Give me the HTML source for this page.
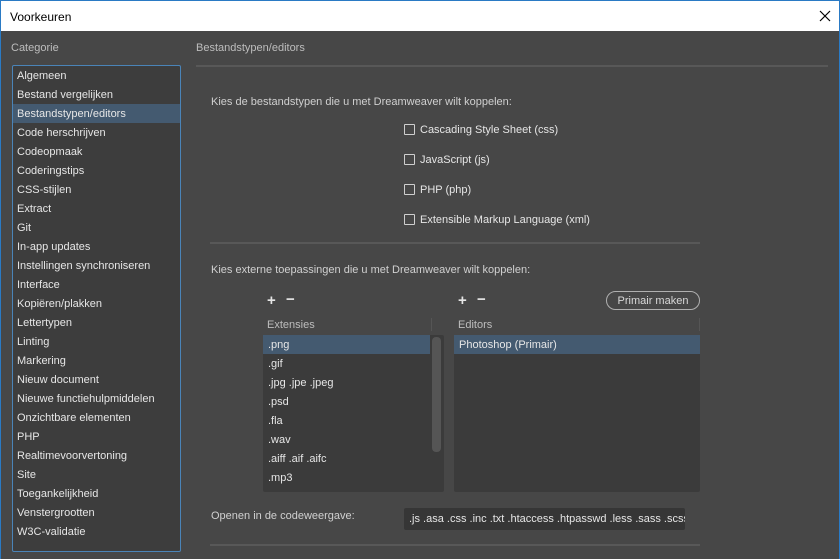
<!DOCTYPE html>
<html><head><style>
*{margin:0;padding:0;box-sizing:border-box}
body{width:840px;height:559px;overflow:hidden;background:#474747;font-family:"Liberation Sans",sans-serif;font-size:11px;color:#e6e6e6;position:relative}
.a{position:absolute;white-space:nowrap}
span.a{margin-top:1px}
#title{left:0;top:0;width:840px;height:31px;background:#fff;border:1px solid #2a7ac4;border-bottom:none;color:#000;font-size:12px}
#frame{left:0;top:31px;width:840px;height:528px;border-left:1px solid #2a7ac4;border-right:1px solid #2a7ac4}
.dim{color:#bdbdbd}
#side{left:12px;top:65px;width:169px;height:487px;background:#3d3d3d;border:1px solid #4a84b8;border-radius:2px}
.it{position:absolute;left:0;width:167px;height:19px;line-height:21px;padding-left:4px}
.sel{background:#445a70}
.line{position:absolute;height:2px;background:#585858}
.cb{position:absolute;width:11px;height:11px;border:1px solid #cfcfcf;border-radius:1px}
.list{position:absolute;background:#3b3b3b;border-radius:2px}
.li{position:absolute;left:0;height:19px;line-height:21px;padding-left:5px}
</style></head><body>
<div class="a" id="title"><span class="a" style="left:9px;top:8px">Voorkeuren</span>
<svg class="a" style="left:818px;top:9px" width="12" height="12"><path d="M1 1L11 11M11 1L1 11" stroke="#000" stroke-width="1.2"/></svg></div>
<div class="a" id="frame"></div>
<span class="a dim" style="left:11px;top:41px">Categorie</span>
<span class="a dim" style="left:196px;top:41px">Bestandstypen/editors</span>
<div class="a" id="side">
<div class="it" style="top:0">Algemeen</div>
<div class="it" style="top:19px">Bestand vergelijken</div>
<div class="it sel" style="top:38px">Bestandstypen/editors</div>
<div class="it" style="top:57px">Code herschrijven</div>
<div class="it" style="top:76px">Codeopmaak</div>
<div class="it" style="top:95px">Coderingstips</div>
<div class="it" style="top:114px">CSS-stijlen</div>
<div class="it" style="top:133px">Extract</div>
<div class="it" style="top:152px">Git</div>
<div class="it" style="top:171px">In-app updates</div>
<div class="it" style="top:190px">Instellingen synchroniseren</div>
<div class="it" style="top:209px">Interface</div>
<div class="it" style="top:228px">Kopiëren/plakken</div>
<div class="it" style="top:247px">Lettertypen</div>
<div class="it" style="top:266px">Linting</div>
<div class="it" style="top:285px">Markering</div>
<div class="it" style="top:304px">Nieuw document</div>
<div class="it" style="top:323px">Nieuwe functiehulpmiddelen</div>
<div class="it" style="top:342px">Onzichtbare elementen</div>
<div class="it" style="top:361px">PHP</div>
<div class="it" style="top:380px">Realtimevoorvertoning</div>
<div class="it" style="top:399px">Site</div>
<div class="it" style="top:418px">Toegankelijkheid</div>
<div class="it" style="top:437px">Venstergrootten</div>
<div class="it" style="top:456px">W3C-validatie</div>
</div>
<div class="line" style="left:196px;top:65px;width:632px"></div>
<span class="a" style="left:211px;top:95px;color:#d0d0d0">Kies de bestandstypen die u met Dreamweaver wilt koppelen:</span>
<div class="cb" style="left:404px;top:124px"></div><span class="a" style="left:420px;top:123px">Cascading Style Sheet (css)</span>
<div class="cb" style="left:404px;top:154px"></div><span class="a" style="left:420px;top:153px">JavaScript (js)</span>
<div class="cb" style="left:404px;top:184px"></div><span class="a" style="left:420px;top:183px">PHP (php)</span>
<div class="cb" style="left:404px;top:214px"></div><span class="a" style="left:420px;top:213px">Extensible Markup Language (xml)</span>
<div class="line" style="left:210px;top:242px;width:490px"></div>
<span class="a" style="left:211px;top:263px;color:#d0d0d0">Kies externe toepassingen die u met Dreamweaver wilt koppelen:</span>
<span class="a" style="left:267px;top:291px;font-size:15px;font-weight:bold">+</span><span class="a" style="left:286px;top:290px;font-size:15px;font-weight:bold">−</span>
<span class="a" style="left:458px;top:291px;font-size:15px;font-weight:bold">+</span><span class="a" style="left:477px;top:290px;font-size:15px;font-weight:bold">−</span>
<div class="a" style="left:606px;top:291px;width:94px;height:19px;border:1px solid #b0b0b0;border-radius:10px;text-align:center;line-height:18px;color:#d8d8d8">Primair maken</div>
<span class="a dim" style="left:267px;top:318px">Extensies</span>
<div class="a" style="left:431px;top:318px;width:1px;height:13px;background:#555"></div>
<span class="a dim" style="left:458px;top:318px">Editors</span>
<div class="a" style="left:699px;top:318px;width:1px;height:13px;background:#555"></div>
<div class="list" style="left:263px;top:335px;width:181px;height:157px">
<div class="li sel" style="top:0;width:167px">.png</div>
<div class="li" style="top:19px">.gif</div>
<div class="li" style="top:38px">.jpg .jpe .jpeg</div>
<div class="li" style="top:57px">.psd</div>
<div class="li" style="top:76px">.fla</div>
<div class="li" style="top:95px">.wav</div>
<div class="li" style="top:114px">.aiff .aif .aifc</div>
<div class="li" style="top:133px">.mp3</div>
<div class="a" style="left:169px;top:2px;width:9px;height:115px;background:#555;border-radius:4px"></div>
</div>
<div class="list" style="left:454px;top:335px;width:246px;height:157px">
<div class="li sel" style="top:0;width:246px">Photoshop (Primair)</div>
</div>
<span class="a" style="left:211px;top:509px;color:#d0d0d0">Openen in de codeweergave:</span>
<div class="a" style="left:404px;top:508px;width:281px;height:22px;background:#363636;border-radius:2px;overflow:hidden;line-height:23px;padding-left:5px">.js .asa .css .inc .txt .htaccess .htpasswd .less .sass .scss</div>
<div class="line" style="left:210px;top:544px;width:490px"></div>
</body></html>
